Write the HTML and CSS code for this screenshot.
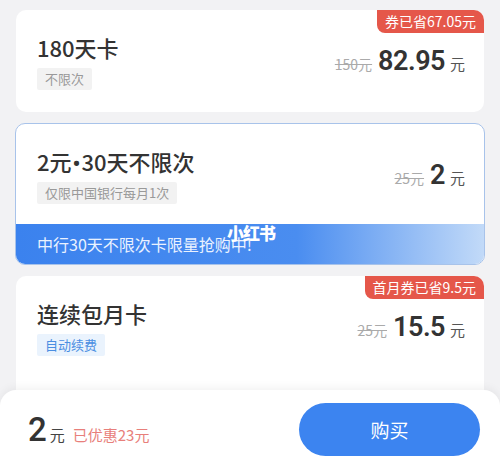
FILE: index.html
```html
<!DOCTYPE html>
<html lang="zh-CN">
<head>
    <meta charset="UTF-8" />
    <title>会员卡购买</title>
    <meta name="viewport" content="width=device-width, initial-scale=1" />
    <link rel="stylesheet" href="styles.css">
</head>
<body>
    <div class="page">
        <div class="list">
            <div class="card">
                <div class="badge">券已省67.05元</div>
                <div class="card-main">
                    <div class="info">
                        <div class="title">180天卡</div>
                        <span class="tag">不限次</span>
                    </div>
                    <div class="price">
                        <span class="old">150元</span>
                        <span class="num">82.95</span>
                        <span class="unit">元</span>
                    </div>
                </div>
            </div>
            <div class="card card-active">
                <div class="card-main">
                    <div class="info">
                        <div class="title">2元<span class="dot">•</span>30天不限次</div>
                        <span class="tag">仅限中国银行每月1次</span>
                    </div>
                    <div class="price">
                        <span class="old">25元</span>
                        <span class="num">2</span>
                        <span class="unit">元</span>
                    </div>
                </div>
                <div class="promo">中行30天不限次卡限量抢购中!</div>
                <div class="mark">小红书</div>
            </div>
            <div class="card card-tall">
                <div class="badge">首月券已省9.5元</div>
                <div class="card-main">
                    <div class="info">
                        <div class="title">连续包月卡</div>
                        <span class="tag tag-blue">自动续费</span>
                    </div>
                    <div class="price">
                        <span class="old">25元</span>
                        <span class="num">15.5</span>
                        <span class="unit">元</span>
                    </div>
                </div>
            </div>
        </div>
        <div class="footer">
            <div class="total">
                <span class="total-num">2</span>
                <span class="total-unit">元</span>
                <span class="saved">已优惠23元</span>
            </div>
            <button class="buy">购买</button>
        </div>
    </div>
</body>
</html>
```

FILE: styles.css
```css
body {
    margin: 0;
    padding: 0;
    background: #f2f2f4;
    font-family: "Noto Sans CJK SC", "Noto Sans", sans-serif;
    color: #333;
}
.page {
    height: 469px;
    display: flex;
    flex-direction: column;
    overflow: hidden;
}
.list {
    flex: 1;
    min-height: 0;
    overflow: hidden;
    padding: 10px 16px 0;
    display: flex;
    flex-direction: column;
    gap: 11px;
}
.card {
    position: relative;
    background: #fff;
    border-radius: 10px;
    flex-shrink: 0;
}
.card-active {
    border: 1px solid #a8c3ea;
    margin: 0 -1px;
    overflow: hidden;
}
.card-active .card-main {
    height: 100px;
}
.card-tall {
    min-height: 130px;
}
.card-main {
    box-sizing: border-box;
    height: 102px;
    display: flex;
    align-items: center;
    justify-content: space-between;
    padding: 22px 19px 0 21px;
    align-items: flex-start;
}
.info {
    display: flex;
    flex-direction: column;
    align-items: flex-start;
}
.title {
    height: 30px;
    font-size: 22px;
    line-height: 30px;
    font-weight: 500;
    color: #333;
}
.dot {
    font-family: Roboto, sans-serif;
    font-weight: 700;
    line-height: 1;
    margin: 0 1px;
}
.tag {
    margin-top: 6px;
    height: 22px;
    line-height: 22px;
    padding: 0 8px;
    font-size: 13px;
    color: #999;
    background: #f2f2f2;
    border-radius: 2px;
}
.tag-blue {
    color: #4a8ee2;
    background: #eaf3fd;
}
.price {
    display: flex;
    align-items: baseline;
    margin-top: 13px;
}
.old {
    font-size: 14px;
    color: #aaa;
    text-decoration: line-through;
    margin-right: 6px;
}
.num {
    font-family: Roboto, "Noto Sans", sans-serif;
    font-size: 27px;
    font-weight: 600;
    letter-spacing: -0.5px;
    color: #333;
}
.unit {
    font-size: 15px;
    color: #555;
    margin-left: 5px;
}
.badge {
    position: absolute;
    top: 0;
    right: 0;
    height: 23px;
    line-height: 23px;
    padding: 0 8px;
    font-size: 14px;
    color: #fff;
    background: #e5574a;
    border-radius: 0 10px 0 8px;
}
.promo {
    height: 40px;
    line-height: 40px;
    padding-left: 21px;
    font-size: 16px;
    color: #eaf2ff;
    background: linear-gradient(90deg, #3b82ee 0%, #4a8df0 60%, #c2daf8 100%);
}
.mark {
    position: absolute;
    left: 211px;
    top: 96px;
    font-size: 17px;
    font-weight: 900;
    color: #fff;
    letter-spacing: -1px;
}
.footer {
    flex-shrink: 0;
    height: 79px;
    background: #fff;
    border-radius: 16px 16px 0 0;
    box-shadow: 0 -2px 10px rgba(0,0,0,0.06);
    display: flex;
    align-items: center;
    justify-content: space-between;
    padding: 0 20px 0 28px;
    position: relative;
}
.total {
    display: flex;
    align-items: baseline;
}
.total-num {
    font-family: Roboto, "Noto Sans", sans-serif;
    font-size: 33px;
    font-weight: 500;
    color: #333;
}
.total-unit {
    font-size: 15px;
    color: #444;
    margin-left: 3px;
}
.saved {
    font-size: 15px;
    color: #e87f7b;
    margin-left: 8px;
}
.buy {
    width: 181px;
    height: 53px;
    border: none;
    border-radius: 27px;
    background: #3c84f0;
    color: #fff;
    font-family: "Noto Sans CJK SC", sans-serif;
    font-size: 19px;
    cursor: pointer;
}
```
